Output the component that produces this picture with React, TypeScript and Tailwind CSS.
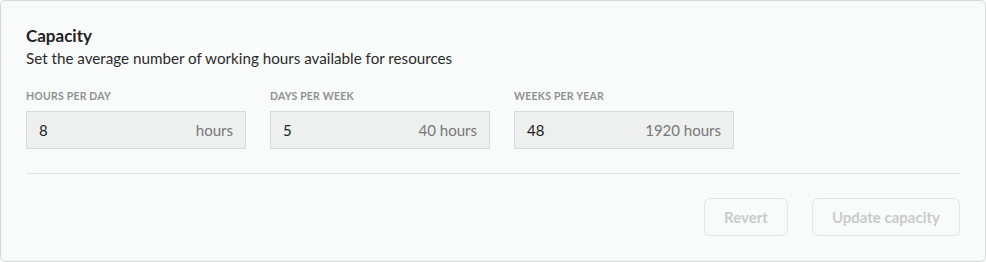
export default function App() {
  const fields = [
    { label: "Hours per day", value: "8", suffix: "hours" },
    { label: "Days per week", value: "5", suffix: "40 hours" },
    { label: "Weeks per year", value: "48", suffix: "1920 hours" },
  ]

  return (
    <div className="w-[986px] h-[262px] bg-white font-['Lato','Noto_Sans',sans-serif]">
      <div className="h-full border border-[#d6d8d8] rounded-[5px] bg-[#f9fbfb] px-[25px] pt-[24px] flex flex-col">
        <h2 className="text-[17px] leading-[22px] font-bold text-[#222]">Capacity</h2>
        <p className="text-[15.2px] leading-[22px] text-[#2a2a2a]">
          Set the average number of working hours available for resources
        </p>

        <div className="flex gap-6 mt-[20px]">
          {fields.map((f) => (
            <div key={f.label} className="flex flex-col">
              <label className="text-[10.5px] leading-[15px] font-bold uppercase tracking-[0.02em] text-[#8e9191]">
                {f.label}
              </label>
              <div className="mt-[7px] w-[220px] h-[38px] bg-[#eef0ef] border border-[#d6dada] flex items-center justify-between px-[12px] text-[15px]">
                <span className="text-[#222]">{f.value}</span>
                <span className="text-[#777]">{f.suffix}</span>
              </div>
            </div>
          ))}
        </div>

        <div className="mt-[24px] border-t border-[#e1e3e3]" />

        <div className="flex justify-end gap-6 mt-[24px]">
          <button className="h-[38px] px-[19px] border border-[#e3e5e5] rounded-[6px] text-[15px] font-bold text-[#c9cbcb]">
            Revert
          </button>
          <button className="h-[38px] px-[19px] border border-[#e3e5e5] rounded-[6px] text-[15px] font-bold text-[#c9cbcb]">
            Update capacity
          </button>
        </div>
      </div>
    </div>
  )
}
